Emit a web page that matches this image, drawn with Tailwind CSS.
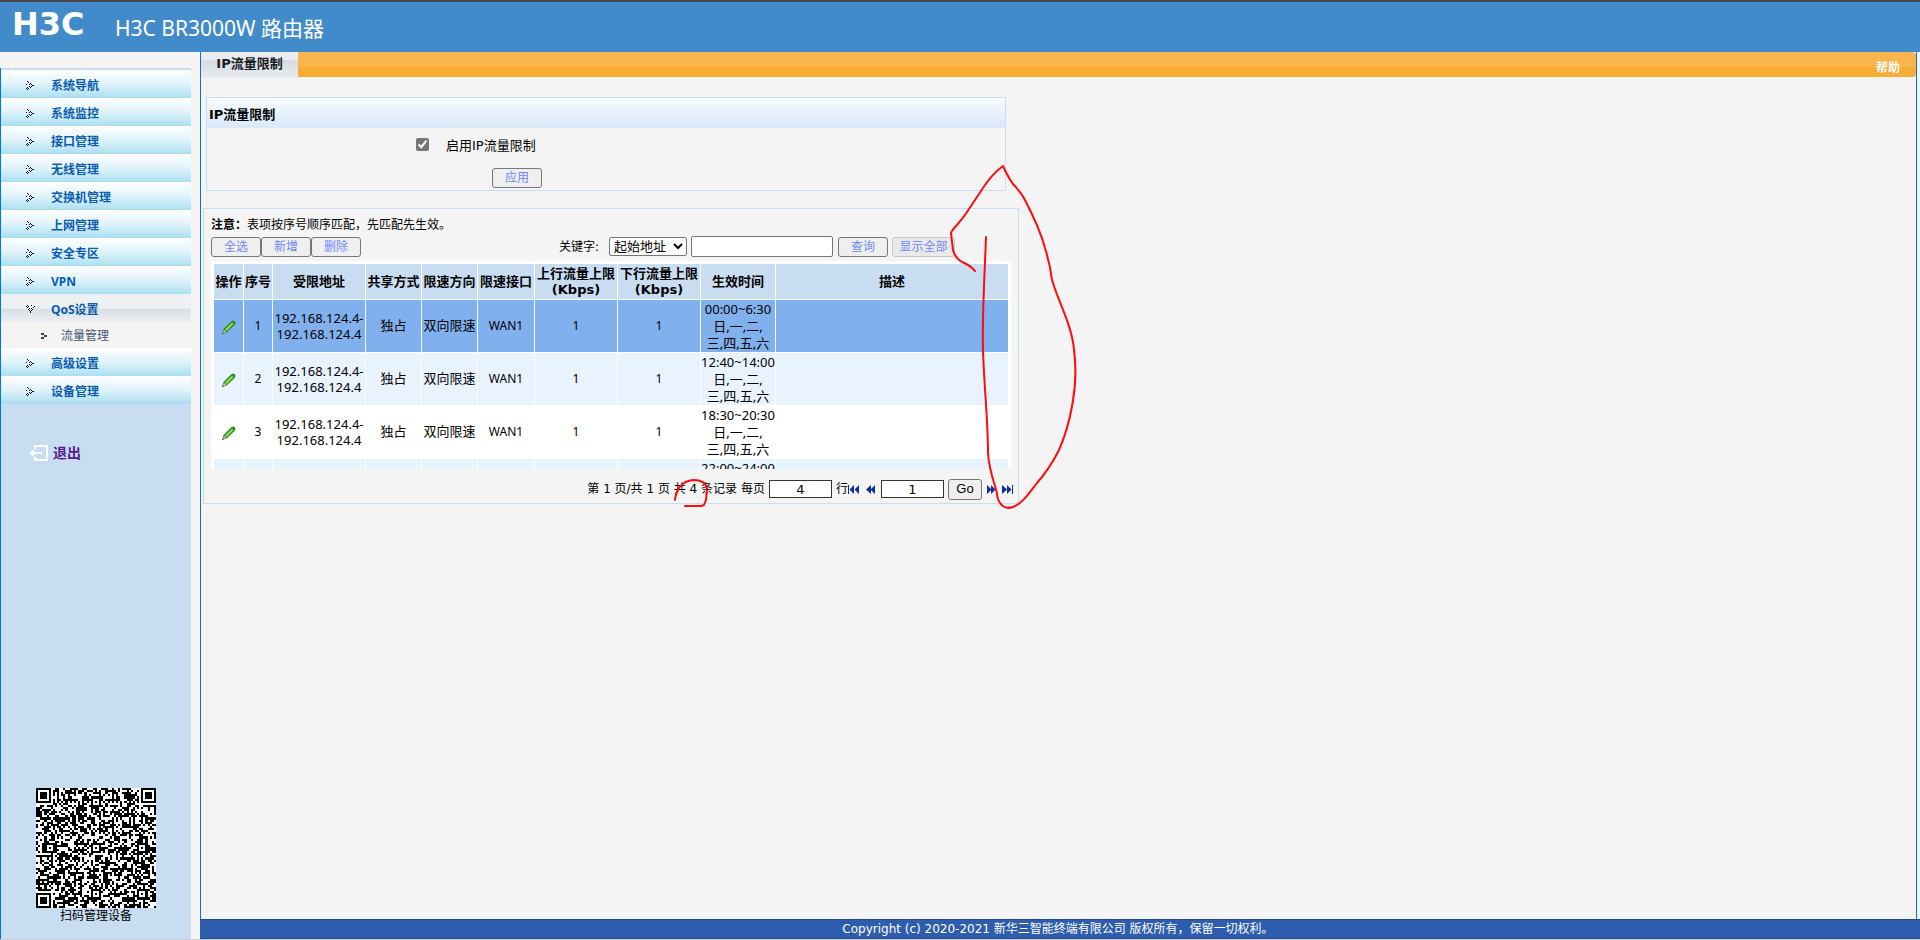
<!DOCTYPE html>
<html lang="zh-CN">
<head>
    <meta charset="UTF-8">
    <meta name="viewport" content="width=device-width, initial-scale=1.0">
    <title>H3C BR3000W 路由器</title>
    <script src="https://cdn.jsdelivr.net/npm/@tailwindcss/browser@4"></script>
</head>
<body class="relative flex min-h-screen flex-col bg-[#f4f4f4] font-['DejaVu_Sans','Noto_Sans_CJK_SC',sans-serif] text-xs text-black">

    <svg class="hidden">
        <symbol id="arrow" viewBox="0 0 9 9">
            <path fill="#000820" d="M1 0h1v1h-1zM2 1h1v1h-1zM4 2h1v1h-1zM0 3h1v1h-1zM3 3h1v1h-1zM5 3h1v1h-1zM6 4h2v1h-2zM3 5h1v1h-1zM5 5h1v1h-1zM1 6h1v1h-1zM4 6h1v1h-1zM0 7h1v1h-1zM2 7h1v1h-1zM1 8h1v1h-1z"/>
        </symbol>
        <symbol id="pencil" viewBox="0 0 14 14">
            <path fill="#2f8a1e" d="M0 14l1.500-5L9 1.500q2-1.800 3.800-.2q1.400 1.800-.3 3.700L5 12.300z"/>
            <path fill="#8fdc5a" d="M3 9.500L10 2.500l1.500 1.500L4.700 11z"/>
            <path fill="#e8c79a" d="M.8 13.200L2 10l2.200 1.800z"/>
            <path fill="#333" d="M0 14l.6-1.700 1.200 1z"/>
        </symbol>
    </svg>

    <header class="flex h-[52px] shrink-0 items-start border-t-2 border-[#4b4648] bg-[#428bca] pl-3 text-white">
        <span class="mt-2 w-[103px] text-[32px] leading-7 font-bold">H3C</span>
        <h1 class="mt-3 font-['Noto_Sans','Noto_Sans_CJK_SC',sans-serif] text-[21px] leading-7">H3C BR3000W 路由器</h1>
    </header>

    <div class="flex flex-1">
        <!-- left menu -->
        <aside class="flex w-[200px] shrink-0 flex-col pt-4">
            <div class="flex w-[191px] flex-1 flex-col border-l border-[#0073f0] bg-[#c8ddf1] pt-0.5">
                <nav class="font-['Noto_Sans','Noto_Sans_CJK_SC',sans-serif] font-bold text-[#0a5cb0]">
                    <a href="#" class="flex h-7 items-center bg-linear-to-b from-white via-[#e0f3fa] to-[#a9def2] pt-[3px] pl-[25px]"><svg class="mr-4 size-[9px]"><use href="#arrow"/></svg>系统导航</a>
                    <a href="#" class="flex h-7 items-center bg-linear-to-b from-white via-[#e0f3fa] to-[#a9def2] pt-[3px] pl-[25px]"><svg class="mr-4 size-[9px]"><use href="#arrow"/></svg>系统监控</a>
                    <a href="#" class="flex h-7 items-center bg-linear-to-b from-white via-[#e0f3fa] to-[#a9def2] pt-[3px] pl-[25px]"><svg class="mr-4 size-[9px]"><use href="#arrow"/></svg>接口管理</a>
                    <a href="#" class="flex h-7 items-center bg-linear-to-b from-white via-[#e0f3fa] to-[#a9def2] pt-[3px] pl-[25px]"><svg class="mr-4 size-[9px]"><use href="#arrow"/></svg>无线管理</a>
                    <a href="#" class="flex h-7 items-center bg-linear-to-b from-white via-[#e0f3fa] to-[#a9def2] pt-[3px] pl-[25px]"><svg class="mr-4 size-[9px]"><use href="#arrow"/></svg>交换机管理</a>
                    <a href="#" class="flex h-7 items-center bg-linear-to-b from-white via-[#e0f3fa] to-[#a9def2] pt-[3px] pl-[25px]"><svg class="mr-4 size-[9px]"><use href="#arrow"/></svg>上网管理</a>
                    <a href="#" class="flex h-7 items-center bg-linear-to-b from-white via-[#e0f3fa] to-[#a9def2] pt-[3px] pl-[25px]"><svg class="mr-4 size-[9px]"><use href="#arrow"/></svg>安全专区</a>
                    <a href="#" class="flex h-7 items-center bg-linear-to-b from-white via-[#e0f3fa] to-[#a9def2] pt-[3px] pl-[25px]"><svg class="mr-4 size-[9px]"><use href="#arrow"/></svg>VPN</a>
                    <a href="#" class="flex h-7 items-center bg-linear-to-b from-[#eef1f4] from-50% via-[#d9dfe4] via-55% to-[#eceff1] pt-[3px] pl-[25px]"><svg class="mr-4 size-[9px] rotate-90"><use href="#arrow"/></svg>QoS设置</a>
                    <a href="#" class="flex h-[26px] items-center bg-[#f4f4f4] pt-px pl-10 font-normal text-[#44566c]"><svg class="mr-3.5 h-[6px] w-[6px]" viewBox="0 0 6 6"><path fill="#33435a" d="M0 0h3v2h-3zM3 2h3v2h-3zM0 4h3v2h-3z"/></svg>流量管理</a>
                    <a href="#" class="flex h-7 items-center bg-linear-to-b from-white via-[#e0f3fa] to-[#a9def2] pt-[3px] pl-[25px]"><svg class="mr-4 size-[9px]"><use href="#arrow"/></svg>高级设置</a>
                    <a href="#" class="flex h-7 items-center bg-linear-to-b from-white via-[#e0f3fa] to-[#a9def2] pt-[3px] pl-[25px]"><svg class="mr-4 size-[9px]"><use href="#arrow"/></svg>设备管理</a>
                </nav>
                <a href="#" class="mt-[39px] flex items-center pl-7 text-sm leading-5 font-bold text-[#551a8b]">
                    <svg class="mr-1 h-4 w-5" viewBox="0 0 20 16"><path fill="none" stroke="#fff" stroke-width="2" d="M6 4V1h12v14H6v-3"/><path fill="#fff" d="M0 8l5-4v3h8v2H5v3z"/></svg>退出
                </a>
                <div class="mt-auto flex flex-col items-center pb-3.5">
                    <svg class="size-[120px] bg-white" viewBox="0 0 57 57" shape-rendering="crispEdges"><path id="qr"/></svg>
                    <p class="leading-[17px]">扫码管理设备</p>
                </div>
            </div>
        </aside>

        <div class="flex flex-1 flex-col">
            <main class="mr-[3px] flex flex-1 flex-col border-x border-[#0073f0]">
                <div class="flex h-[26px] items-start font-bold">
                    <h2 class="h-[26px] w-[97px] rounded-tr bg-linear-to-b from-[#e9ecef] from-30% via-[#d5dbe0] via-30% to-[#e9edf1] text-center text-[13px] leading-6 text-[#1a1a22]">IP流量限制</h2>
                    <div class="flex h-[25px] flex-1 items-end justify-end rounded-r bg-linear-to-b from-[#f9b54b] from-60% to-[#f7ac34] to-60% pr-4">
                        <a href="#" class="leading-[18px] text-white">帮助</a>
                    </div>
                </div>

                <form class="mt-[19px] ml-[5px] w-[800px] max-w-full border border-[#c8ddf1]">
                    <h3 class="h-[30px] bg-linear-to-b from-[#f7faff] to-[#d9e8fa] pl-[2px] text-[13px] leading-[34px] font-bold">IP流量限制</h3>
                    <div class="flex h-9 items-center pl-[209px]">
                        <input type="checkbox" id="enable" checked class="mb-1 size-[13px] accent-[#767676]">
                        <label for="enable" class="pl-[17px] text-[13px]">启用IP流量限制</label>
                    </div>
                    <div class="flex justify-center pt-1 pb-[2px] pl-5">
                        <div class="w-[330px] pl-[41px]"><button type="button" class="h-5 w-[50px] rounded-[3px] border border-[#767676] bg-[#efefef] text-[#7088ff]">应用</button></div>
                    </div>
                </form>

                <section class="mt-[17px] ml-[2px] w-[816px] max-w-full border border-[#c8ddf1] pt-[7px] pl-[7px]">
                    <p class="leading-[18px]"><b>注意：</b>表项按序号顺序匹配，先匹配先生效。</p>
                    <div class="mt-[2px] flex h-[21px] items-center">
                        <button type="button" class="h-5 w-[50px] rounded-[3px] border border-[#767676] bg-[#efefef] text-[#7088ff]">全选</button>
                        <button type="button" class="h-5 w-[50px] rounded-[3px] border border-[#767676] bg-[#efefef] text-[#7088ff]">新增</button>
                        <button type="button" class="h-5 w-[50px] rounded-[3px] border border-[#767676] bg-[#efefef] text-[#7088ff]">删除</button>
                        <label for="field" class="ml-auto w-[50px]">关键字:</label>
                        <select id="field" class="h-[19px] w-[78px] rounded-[2px] border border-[#767676] bg-white text-[13px] leading-4">
                            <option>起始地址</option>
                        </select>
                        <input type="text" aria-label="关键字" class="ml-1 h-[21px] w-[142px] rounded-[2px] border border-[#767676] bg-white px-1">
                        <button type="button" class="ml-[5px] h-5 w-[50px] rounded-[3px] border border-[#767676] bg-[#efefef] text-[#7088ff]">查询</button>
                        <button type="button" class="mr-[63px] ml-1 h-5 w-[63px] rounded-[3px] border border-[#c9c9c9] bg-[#e9e9e9] text-[#7088ff]">显示全部</button>
                    </div>

                    <div class="mt-1 h-[208px] w-[800px] overflow-hidden bg-white p-0.5">
                        <table class="w-full table-fixed border-separate border-spacing-px text-center">
                            <colgroup>
                                <col class="w-[29px]"><col class="w-[28px]"><col class="w-[92px]"><col class="w-[55px]"><col class="w-[55px]">
                                <col class="w-[56px]"><col class="w-[82px]"><col class="w-[82px]"><col class="w-[74px]"><col>
                            </colgroup>
                            <thead class="bg-[#c8ddf1] text-[13px] leading-4 whitespace-nowrap">
                                <tr class="h-[35px]">
                                    <th>操作</th><th>序号</th><th>受限地址</th><th>共享方式</th><th>限速方向</th><th>限速接口</th>
                                    <th>上行流量上限<br>(Kbps)</th><th>下行流量上限<br>(Kbps)</th><th>生效时间</th><th>描述</th>
                                </tr>
                            </thead>
                            <tbody id="rules" class="font-['Noto_Sans','Noto_Sans_CJK_SC',sans-serif] whitespace-nowrap"></tbody>
                        </table>
                    </div>

                    <div class="flex h-[34px] items-center justify-end pt-1.5 pr-1">
                        <span>第 1 页/共 1 页 共 4 条记录</span>
                        <label for="size" class="mx-1">每页</label>
                        <input type="text" id="size" value="4" class="h-[18px] w-[63px] border border-[#333] bg-white text-center text-[13px]">
                        <span class="ml-1">行</span>
                        <button type="button" aria-label="首页"><svg class="h-[9px] w-3" viewBox="0 0 12 9" fill="#0a2f9c"><path d="M0 0h1v9H0zM6 0v9L1.500 4.500zM11 0v9L6.500 4.500z"/></svg></button>
                        <button type="button" aria-label="上一页" class="ml-1.5"><svg class="h-[9px] w-[10px]" viewBox="0 0 10 9" fill="#0a2f9c"><path d="M5 0v9L0 4.500zM9 0v9L4.500 4.500z"/></svg></button>
                        <input type="text" aria-label="页码" value="1" class="ml-[5px] h-[18px] w-[63px] border border-[#333] bg-white text-center text-[13px]">
                        <button type="button" class="ml-1 h-[21px] w-[34px] rounded-[3px] border border-[#767676] bg-[#efefef] font-['Liberation_Sans',sans-serif] text-[13px]">Go</button>
                        <button type="button" aria-label="下一页" class="ml-1"><svg class="h-[9px] w-[10px]" viewBox="0 0 10 9" fill="#0a2f9c"><path d="M1 0l4.500 4.500L1 9zM5 0l4.500 4.500L5 9z"/></svg></button>
                        <button type="button" aria-label="末页" class="ml-1.5"><svg class="h-[9px] w-3" viewBox="0 0 12 9" fill="#0a2f9c"><path d="M10 0h1v9h-1zM0 0l5 4.500L0 9zM5 0l4.500 4.500L5 9z"/></svg></button>
                    </div>
                </section>
            </main>
            <footer class="border-y border-[#264a8d] bg-[#2f5dae] pr-1 text-center leading-[18px] text-white">Copyright (c) 2020-2021 新华三智能终端有限公司 版权所有，保留一切权利。</footer>
        </div>
    </div>
    <div class="h-px shrink-0 bg-[#d0d0d0]"></div>

    <!-- red pen marks -->
    <svg class="pointer-events-none absolute top-0 left-0" width="1100" height="520" fill="none" stroke="#fb0d0d" stroke-width="2" stroke-linejoin="round" stroke-linecap="round">
        <path d="M975 271Q970 265 962 262Q955 258 953 250L951 233Q952 230 957 225Q963 218 967 212L983 188Q992 174 1003 166Q1008 177 1013 184Q1021 192 1025 200Q1040 229 1045 248Q1050 264 1052 280C1058 301 1072 325 1074 350C1079 385 1070 425 1059 450C1052 464 1044 475 1037 483C1029 493 1023 503 1013 507C1002 511 997 500 997 493C994 482 989 470 988 453C988 420 984 385 983 350C982 320 984 290 986 237"/>
        <path d="M675 500Q677 482 693 480Q706 480 707 489L706 500L704 505L701 506H685"/>
    </svg>

    <script>
        const rules = [
            ['00:00~6:30', 'bg-[#80b0ee]'],
            ['12:40~14:00', 'bg-[#e8f3fe]'],
            ['18:30~20:30', 'bg-white'],
            ['22:00~24:00', 'bg-[#e8f3fe]']
        ];
        document.getElementById('rules').innerHTML = rules.map(([time, bg], i) => `
            <tr class="h-[52px] ${bg}">
                <td><button type="button" aria-label="编辑" class="align-middle"><svg class="size-[14px]"><use href="#pencil"/></svg></button></td>
                <td>${i + 1}</td>
                <td class="text-[13px] leading-4">192.168.124.4-<br>192.168.124.4</td>
                <td class="text-[13px]">独占</td>
                <td class="text-[13px]">双向限速</td>
                <td>WAN1</td>
                <td>1</td>
                <td>1</td>
                <td class="text-[13px] leading-[17px]">${time}<br>日,一,二,<br>三,四,五,六</td>
                <td></td>
            </tr>`).join('');

        // QR code, 57 x 57 modules
        const N = 57;
        let seed = 20213;
        function ring(x, y, cx, cy) {
            return Math.max(Math.abs(x - cx), Math.abs(y - cy));
        }
        function dark(x, y) {
            seed = (seed * 1103515245 + 12345) % 2147483648;
            for (const [cx, cy] of [[3, 3], [N - 4, 3], [3, N - 4]]) {
                const r = ring(x, y, cx, cy);
                if (r <= 4) return r !== 2 && r !== 4;
            }
            for (const cx of [6, 28, 50]) {
                for (const cy of [6, 28, 50]) {
                    if ((cx === 6 && cy !== 28) || (cy === 6 && cx === 50)) continue;
                    const r = ring(x, y, cx, cy);
                    if (r <= 2) return r !== 1;
                }
            }
            if (x === 6 || y === 6) return (x + y) % 2 === 0;
            return seed / 2147483648 < 0.52;
        }
        let d = '';
        for (let y = 0; y < N; y++) {
            for (let x = 0; x < N; x++) {
                if (dark(x, y)) d += `M${x} ${y}h1v1h-1z`;
            }
        }
        document.getElementById('qr').setAttribute('d', d);
    </script>

</body>
</html>
